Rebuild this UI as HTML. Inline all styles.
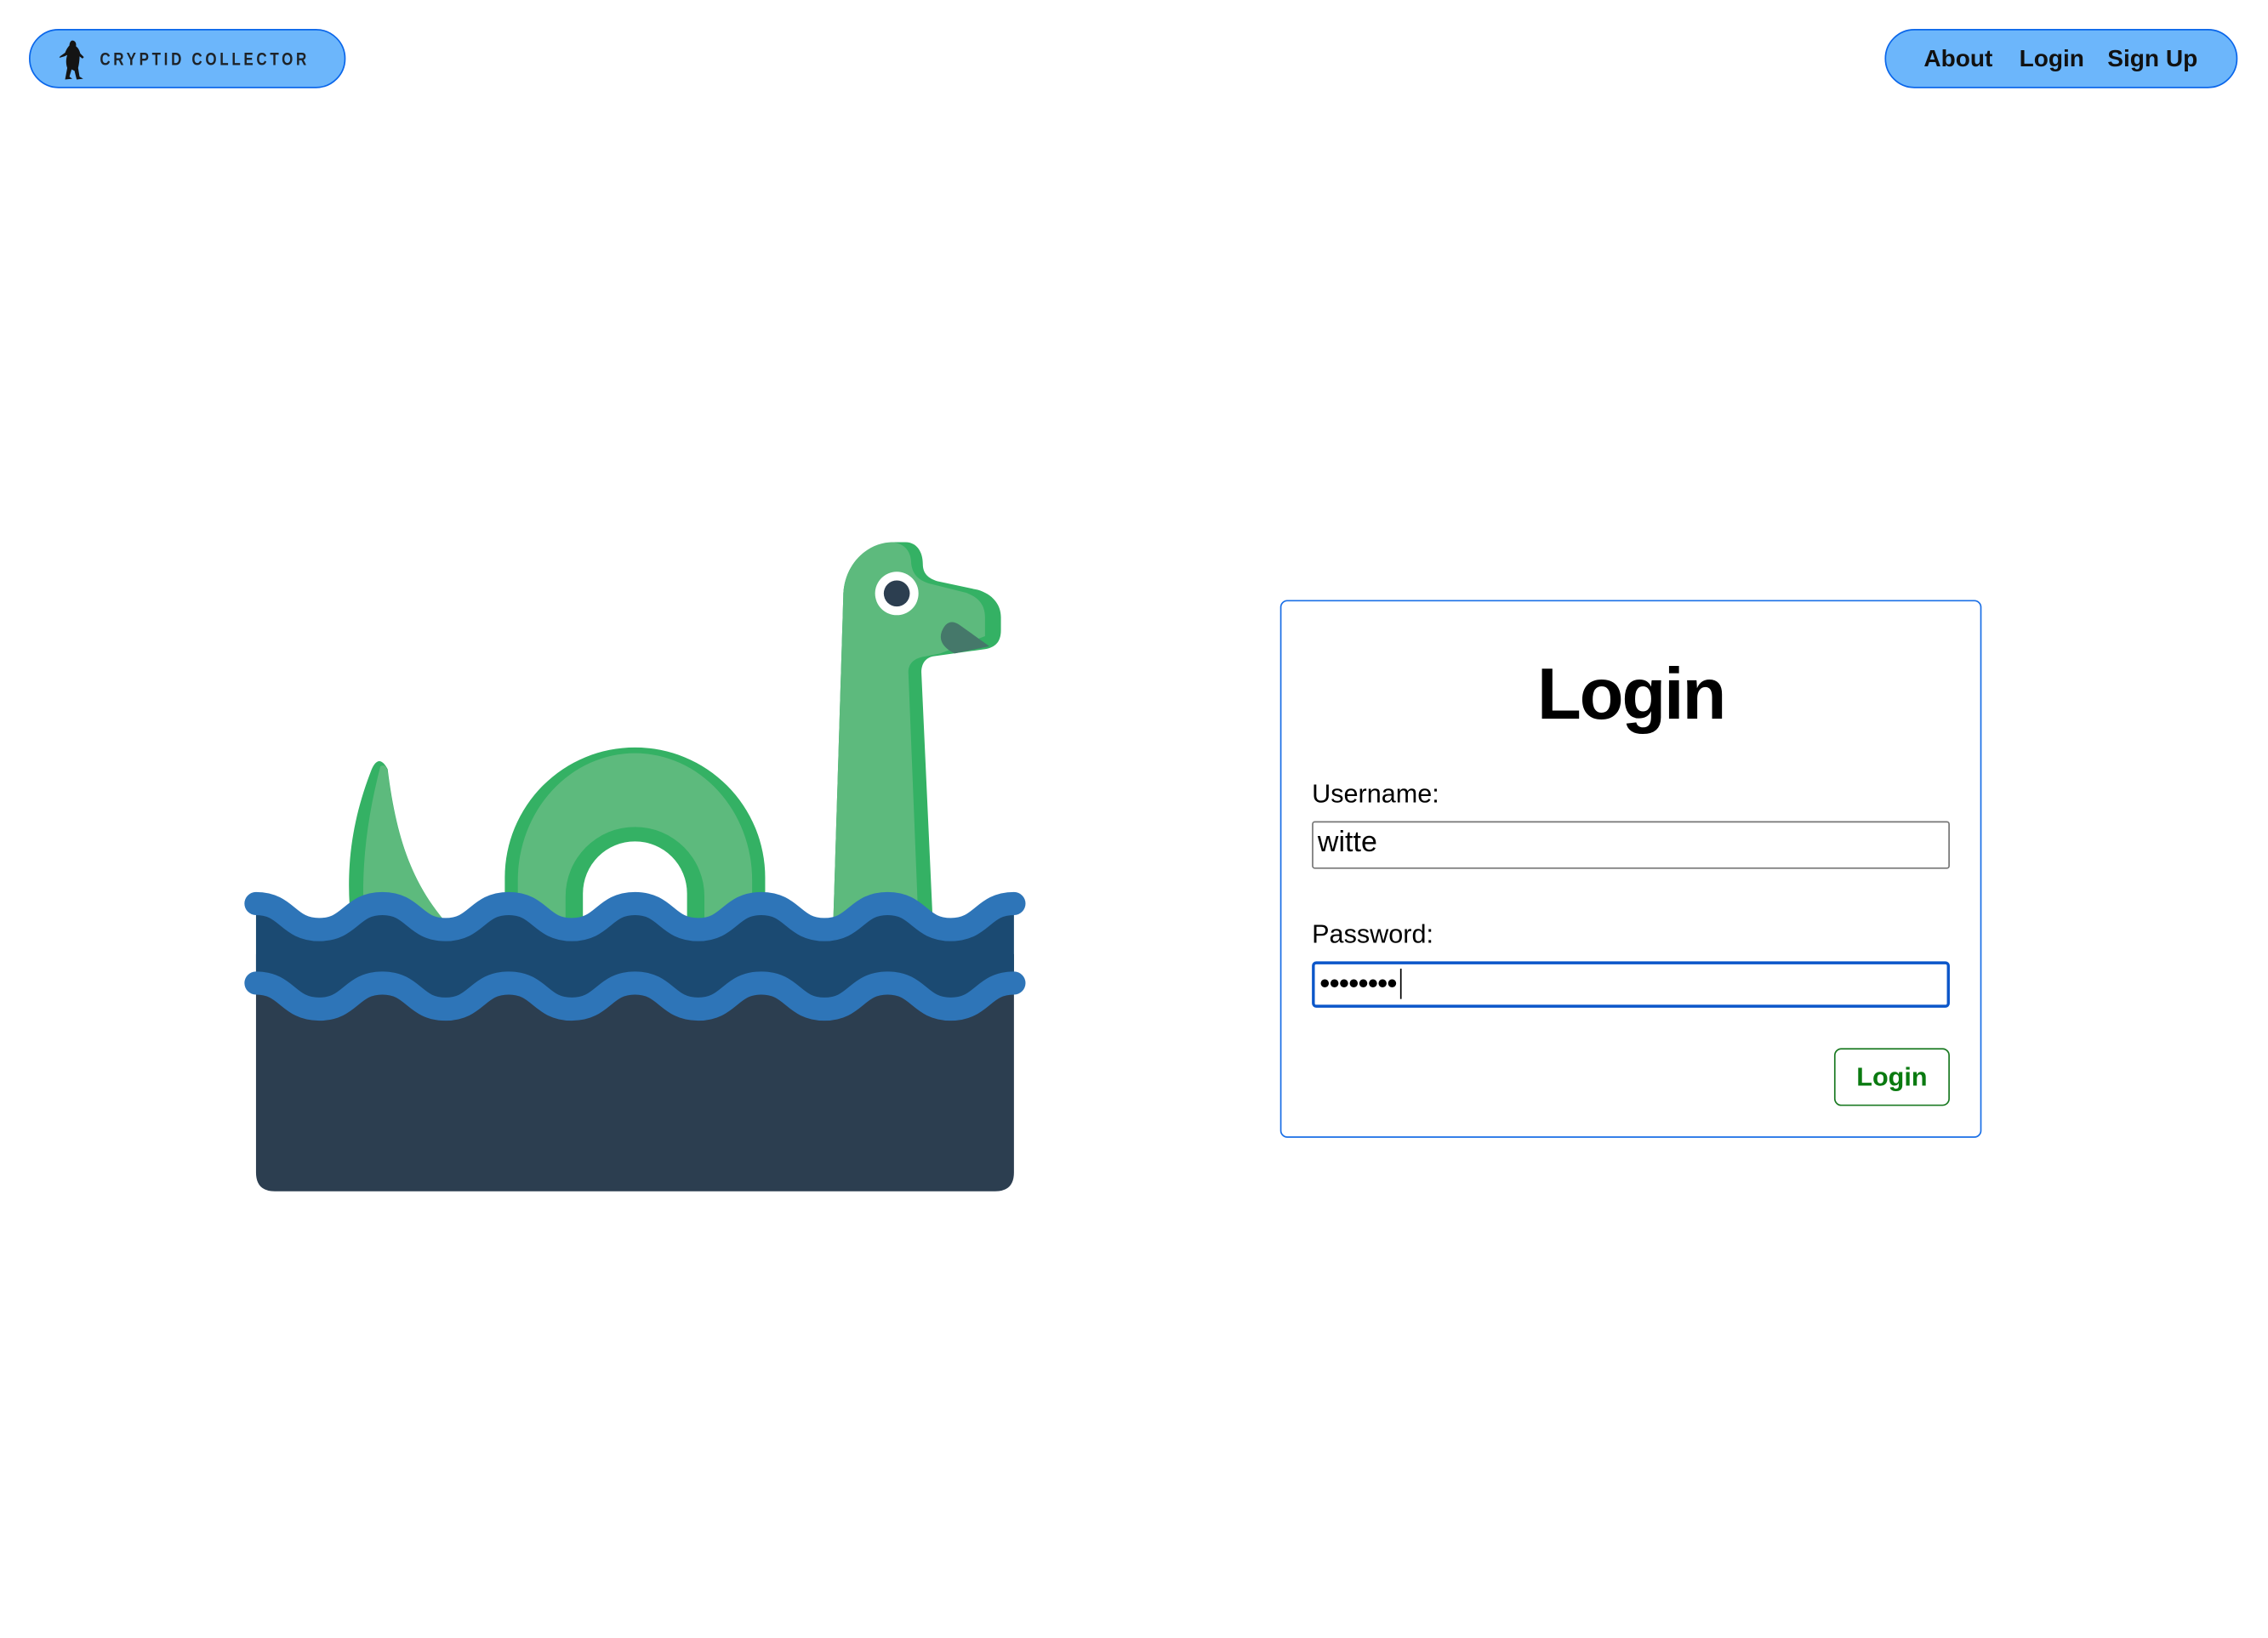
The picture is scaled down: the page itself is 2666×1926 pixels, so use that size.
<!DOCTYPE html>
<html><head><meta charset="utf-8"><style>
html,body{margin:0;padding:0;background:#fff;width:2666px;height:1926px;overflow:hidden}
#s{position:absolute;left:0;top:0;width:1568px;height:1133px;transform:scale(1.70026,1.6999);transform-origin:0 0;font-family:"Liberation Sans",Arial,sans-serif}
.a{position:absolute;white-space:nowrap}
.pill{position:absolute;background:#6cb6fb;border:1.2px solid #0a66ea;border-radius:21px;box-sizing:border-box}
.nav{font-weight:bold;font-size:16.5px;line-height:16.5px;color:#111}
</style></head><body><div id="s">
<div class="pill" style="left:20px;top:20px;width:219px;height:41px"></div>
<svg class="a" style="left:37px;top:27px" width="26" height="30" viewBox="0 0 26 30">
<path d="M13,1 C15,1 16,3 15.5,5 C17,6 18,8 18.5,10 L21,12.5 L20,13.5 L18,12 C18,15 17.5,18 17,20 L18,26 L20.5,27.5 L16,28 L14.5,22 L12.5,21 L11,26 L13,27.5 L8,28 L9.5,20 C8.5,17 8.5,14 9.5,11 L7.5,12 L4,13 L4.5,12 L8,9.5 C9,7 10,5.5 11,4.5 C11,2.5 12,1 13,1 Z" fill="#141414"/></svg>
<div class="a" style="left:69px;top:34.5px;font-size:12.5px;line-height:12.5px;font-weight:bold;letter-spacing:2.7px;color:#1e2328;transform:scaleX(0.8);transform-origin:0 0">CRYPTID COLLECTOR</div>
<div class="pill" style="left:1303px;top:20px;width:244px;height:41px"></div>
<div class="a nav" style="left:1330px;top:33px">About</div>
<div class="a nav" style="left:1396px;top:33px">Login</div>
<div class="a nav" style="left:1457px;top:33px">Sign Up</div>

<svg class="a" style="left:0;top:0" width="1568" height="1133" viewBox="0 0 1568 1133">
<path d="M257,532 Q262,521 268,532 C274,580 285,612 310,640 L243,640 C238,600 244,565 257,532 Z" fill="#34b164"/>
<path d="M263,530 Q267,528 268,534 C274,580 285,612 310,640 L252,640 C249,600 254,565 263,530 Z" fill="#5dba7d"/>
<path d="M349,645 L349,607 A90,90 0 0 1 529,607 L529,645 Z" fill="#34b164"/>
<path d="M358,645 L358,609 A81,88 0 0 1 520,609 L520,645 Z" fill="#5dba7d"/>
<path d="M391,645 L391,620 A48,48 0 0 1 487,620 L487,645 Z" fill="#34b164"/>
<path d="M403,645 L403,618 A36,36 0 0 1 475,618 L475,645 Z" fill="#fff"/>
<path d="M576,640 L583,413 C583,390 600,375 619,375 L626,375 C634,375 638,382 638,390 C638,397 642,400 648,402 L676,408 C686,411 692,418 692,427 L692,436 C692,445 687,448 681,449 L645,454 C640,455 637,459 637,465 L645,640 Z" fill="#34b164"/>
<path d="M576,640 L583,413 C583,390 600,375 617,375 C626,376 630,382 630,390 C631,398 636,402 644,404 L668,410 C676,413 681,418 681,427 L681,440 L650,452 L640,454 C632,455 628,459 628,465 L635,640 Z" fill="#5dba7d"/>
<path d="M651,437 Q655,427 663,432 L684,447 L660,452 Q648,446 651,437 Z" fill="#45786a"/>
<circle cx="620" cy="410.5" r="15" fill="#fff"/>
<circle cx="620" cy="410.5" r="9" fill="#2c3e50"/>
<path d="M177,660 L701,660 L701,811 Q701,824 688,824 L190,824 Q177,824 177,811 Z" fill="#2c3e50"/>
<path d="M177,625 C198.8,625 198.8,643 220.67,643 C242.5,643 242.5,625 264.33,625 C286.2,625 286.2,643 308,643 C329.8,643 329.8,625 351.67,625 C373.5,625 373.5,643 395.33,643 C417.2,643 417.2,625 439,625 C460.8,625 460.8,643 482.67,643 C504.5,643 504.5,625 526.33,625 C548.2,625 548.2,643 570,643 C591.8,643 591.8,625 613.67,625 C635.5,625 635.5,643 657.33,643 C679.2,643 679.2,625 701,625 L701,680 C679.2,680 679.2,698 657.33,698 C635.5,698 635.5,680 613.67,680 C591.8,680 591.8,698 570,698 C548.2,698 548.2,680 526.33,680 C504.5,680 504.5,698 482.67,698 C460.8,698 460.8,680 439,680 C417.2,680 417.2,698 395.33,698 C373.5,698 373.5,680 351.67,680 C329.8,680 329.8,698 308,698 C286.2,698 286.2,680 264.33,680 C242.5,680 242.5,698 220.67,698 C198.8,698 198.8,680 177,680 Z" fill="#1b4a72"/>
<g fill="none" stroke="#2e75b8" stroke-width="16" stroke-linecap="round">
<path d="M177,625 C198.8,625 198.8,643 220.67,643 C242.5,643 242.5,625 264.33,625 C286.2,625 286.2,643 308,643 C329.8,643 329.8,625 351.67,625 C373.5,625 373.5,643 395.33,643 C417.2,643 417.2,625 439,625 C460.8,625 460.8,643 482.67,643 C504.5,643 504.5,625 526.33,625 C548.2,625 548.2,643 570,643 C591.8,643 591.8,625 613.67,625 C635.5,625 635.5,643 657.33,643 C679.2,643 679.2,625 701,625"/>
<path d="M177,680 C198.8,680 198.8,698 220.67,698 C242.5,698 242.5,680 264.33,680 C286.2,680 286.2,698 308,698 C329.8,698 329.8,680 351.67,680 C373.5,680 373.5,698 395.33,698 C417.2,698 417.2,680 439,680 C460.8,680 460.8,698 482.67,698 C504.5,698 504.5,680 526.33,680 C548.2,680 548.2,698 570,698 C591.8,698 591.8,680 613.67,680 C635.5,680 635.5,698 657.33,698 C679.2,698 679.2,680 701,680"/>
</g>
</svg>

<div class="a" style="left:885px;top:415px;width:485px;height:372px;border:1.2px solid #1a6fe6;border-radius:5px;box-sizing:border-box"></div>
<div class="a" style="left:885px;width:485px;top:455px;text-align:center;font-size:50px;line-height:50px;font-weight:bold;color:#000;letter-spacing:-1.3px">Login</div>
<div class="a" style="left:907px;top:540px;font-size:18px;line-height:18px;color:#000">Username:</div>
<div class="a" style="left:907px;top:568px;width:441px;height:33px;border:1px solid #767676;border-radius:2px;box-sizing:border-box"></div>
<div class="a" style="left:911px;top:573px;font-size:20px;line-height:20px;color:#000">witte</div>
<div class="a" style="left:907px;top:637px;font-size:18px;line-height:18px;color:#000">Password:</div>
<div class="a" style="left:907px;top:665px;width:441px;height:32px;border:2px solid #0b56c9;border-radius:3px;box-sizing:border-box"></div>
<div class="a" style="left:912px;top:671px;font-size:13px;line-height:18px;color:#000;letter-spacing:-1.2px">●●●●●●●●</div>
<div class="a" style="left:968px;top:670px;width:1px;height:21px;background:#000"></div>
<div class="a" style="left:1268px;top:725px;width:80px;height:40px;border:1.2px solid #1a7a22;border-radius:5px;box-sizing:border-box"></div>
<div class="a" style="left:1268px;width:80px;top:736px;text-align:center;font-size:18px;line-height:18px;font-weight:bold;color:#0a7a10">Login</div>
</div></body></html>
